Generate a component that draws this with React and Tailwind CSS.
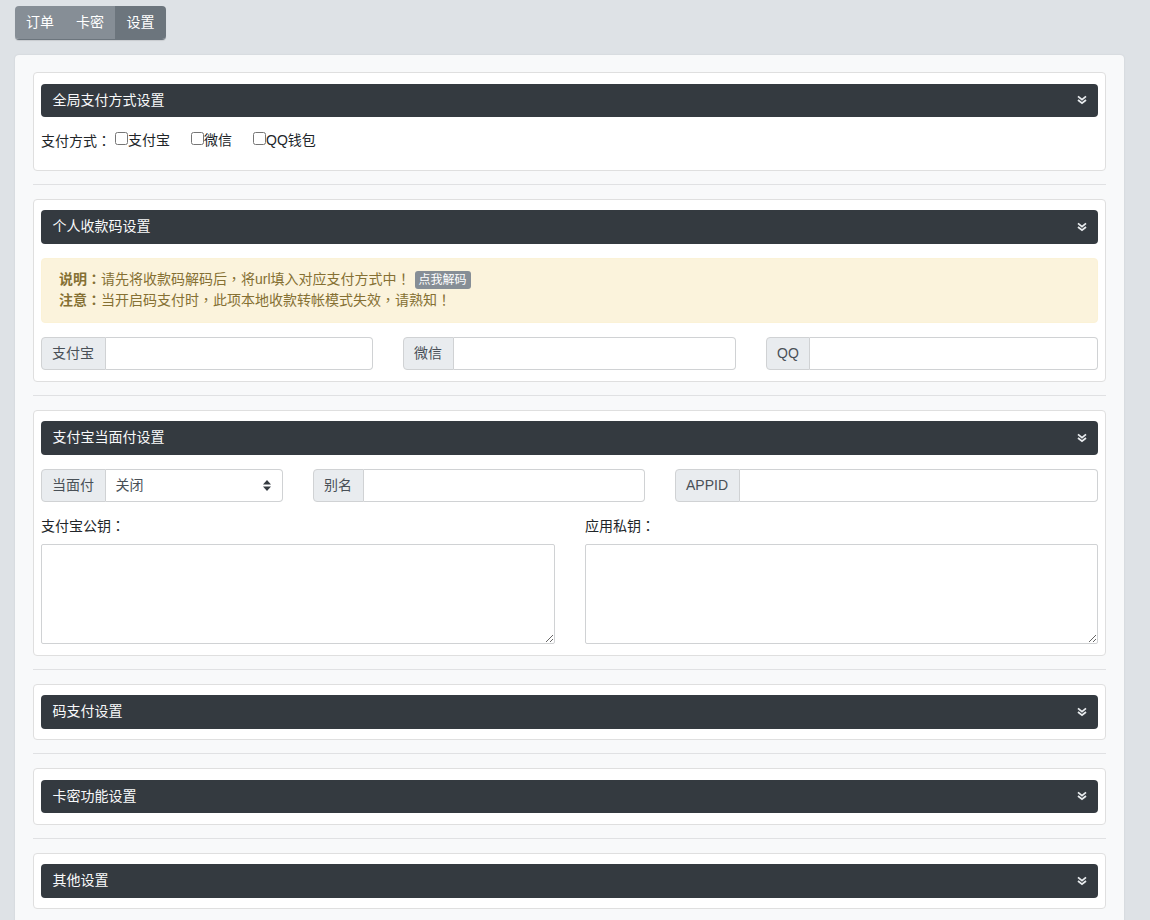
import React from "react";

function P({ children }) {
  return <span className="font-['Noto_Sans_CJK_TC',sans-serif]">{children}</span>;
}

function Chevrons() {
  return (
    <svg width="10" height="10" viewBox="0 0 10 10" fill="none" stroke="#e9ecef" strokeWidth="1.8" className="shrink-0">
      <path d="M1 1.4 5 4.6 9 1.4" />
      <path d="M1 5 5 8.2 9 5" />
    </svg>
  );
}

function Header({ title }) {
  return (
    <div className="flex h-[33.5px] items-center justify-between rounded-[4px] bg-[#343a40] pl-[11.5px] pr-[11px] text-[14px] text-[#f8f9fa]">
      <span>{title}</span>
      <Chevrons />
    </div>
  );
}

function Panel({ children, className = "" }) {
  return (
    <div className={`rounded-[4px] border border-[#dfdfdf] bg-white px-[7px] ${className}`}>
      {children}
    </div>
  );
}

function Rule() {
  return <div className="mb-[14px] mt-[13px] h-px bg-[#e0e1e3]" />;
}

function Group({ label, className = "", children }) {
  return (
    <div className={`flex h-[33px] ${className}`}>
      <span className="flex items-center rounded-l-[4px] border border-[#d0d2d4] bg-[#e9ecef] pl-[10px] pr-[10.5px] text-[14px] text-[#495057]">
        {label}
      </span>
      {children || <input className="min-w-0 flex-1 rounded-r-[4px] border border-l-0 border-[#d0d2d4] bg-white" />}
    </div>
  );
}

function Check({ label, className = "" }) {
  return (
    <label className={`flex items-center ${className}`}>
      <input type="checkbox" className="m-0 mb-[4px] size-[13px]" />
      <span>{label}</span>
    </label>
  );
}

export default function App() {
  return (
    <div className="min-h-[920px] overflow-hidden bg-[#dee2e6] pl-[15px] pr-[26px] pt-[6px] font-['Liberation_Sans','Noto_Sans_CJK_SC',sans-serif] text-[14px] text-[#212529]">
      <div className="flex h-[34px] w-[151px] overflow-hidden rounded-[4px] border-b border-[#6c757d] text-[14px] text-white shadow-[0_1px_1px_rgba(0,0,0,0.1)]">
        <span className="flex w-[50px] items-center justify-center bg-[#868e96]">订单</span>
        <span className="flex w-[50px] items-center justify-center bg-[#868e96]">卡密</span>
        <span className="flex w-[51px] items-center justify-center bg-[#6c757d]">设置</span>
      </div>

      <div className="mt-[15px] rounded-t-[4px] bg-[#f8f9fa] px-[18px] pt-[17px] shadow-[0_0_2px_rgba(0,0,0,0.1)]">
        <Panel className="h-[99px] pt-[10.5px]">
          <Header title="全局支付方式设置" />
          <div className="mt-[13px] flex h-[21px] items-center leading-[21px]">
            <span>支付方式<P>：</P></span>
            <Check label="支付宝" className="ml-[4px]" />
            <Check label="微信" className="ml-[21px]" />
            <Check label="QQ钱包" className="ml-[21px]" />
          </div>
        </Panel>
        <Rule />

        <Panel className="h-[183px] pt-[10px]">
          <Header title="个人收款码设置" />
          <div className="mt-[14.5px] h-[65px] rounded-[4px] border border-[#fbf2d6] bg-[#fbf3dc] pl-[17px] pt-[9px] leading-[21px] text-[#857033]">
            <div className="flex h-[21px] items-center">
              <b className="font-bold">说明<P>：</P></b>
              <span>请先将收款码解码后<P>，</P>将url填入对应支付方式中<P>！</P></span>
              <span className="ml-[4px] mt-[3px] flex h-[18px] items-center rounded-[3px] bg-[#868e96] px-[4px] text-[12px] text-white">点我解码</span>
            </div>
            <div className="h-[21px]">
              <b className="font-bold">注意<P>：</P></b>当开启码支付时<P>，</P>此项本地收款转帐模式失效<P>，</P>请熟知<P>！</P>
            </div>
          </div>
          <div className="mt-[14px] flex justify-between">
            <Group label="支付宝" className="w-[332px]" />
            <Group label="微信" className="w-[333px]" />
            <Group label="QQ" className="w-[332px]" />
          </div>
        </Panel>
        <Rule />

        <Panel className="h-[246px] pt-[10px]">
          <Header title="支付宝当面付设置" />
          <div className="mt-[14.5px] flex">
            <Group label="当面付" className="w-[242px]">
              <div className="flex flex-1 items-center justify-between rounded-r-[4px] border border-l-0 border-[#d0d2d4] bg-white pl-[10px] pr-[11px] text-[#495057]">
                <span>关闭</span>
                <svg width="8" height="11" viewBox="0 0 8 11" fill="#343a40">
                  <path d="M4 0 8 4.4H0Z" />
                  <path d="M4 11 0 6.6H8Z" />
                </svg>
              </div>
            </Group>
            <Group label="别名" className="ml-[30px] w-[332px]" />
            <Group label="APPID" className="ml-[30px] w-[423px]" />
          </div>
          <div className="mt-[13px] flex gap-[30px]">
            <div className="w-[514px]">
              <div className="h-[21px] leading-[21px]">支付宝公钥<P>：</P></div>
              <textarea className="mt-[8px] block h-[100px] w-full rounded-[2px] border border-[#d0d2d4] bg-white" />
            </div>
            <div className="w-[513px]">
              <div className="h-[21px] leading-[21px]">应用私钥<P>：</P></div>
              <textarea className="mt-[8px] block h-[100px] w-full rounded-[2px] border border-[#d0d2d4] bg-white" />
            </div>
          </div>
        </Panel>
        <Rule />

        <Panel className="h-[56px] pt-[10px]">
          <Header title="码支付设置" />
        </Panel>
        <Rule />

        <Panel className="h-[57px] pt-[10.5px]">
          <Header title="卡密功能设置" />
        </Panel>
        <Rule />

        <Panel className="h-[56px] pt-[10px]">
          <Header title="其他设置" />
        </Panel>
        <Rule />
      </div>
    </div>
  );
}
